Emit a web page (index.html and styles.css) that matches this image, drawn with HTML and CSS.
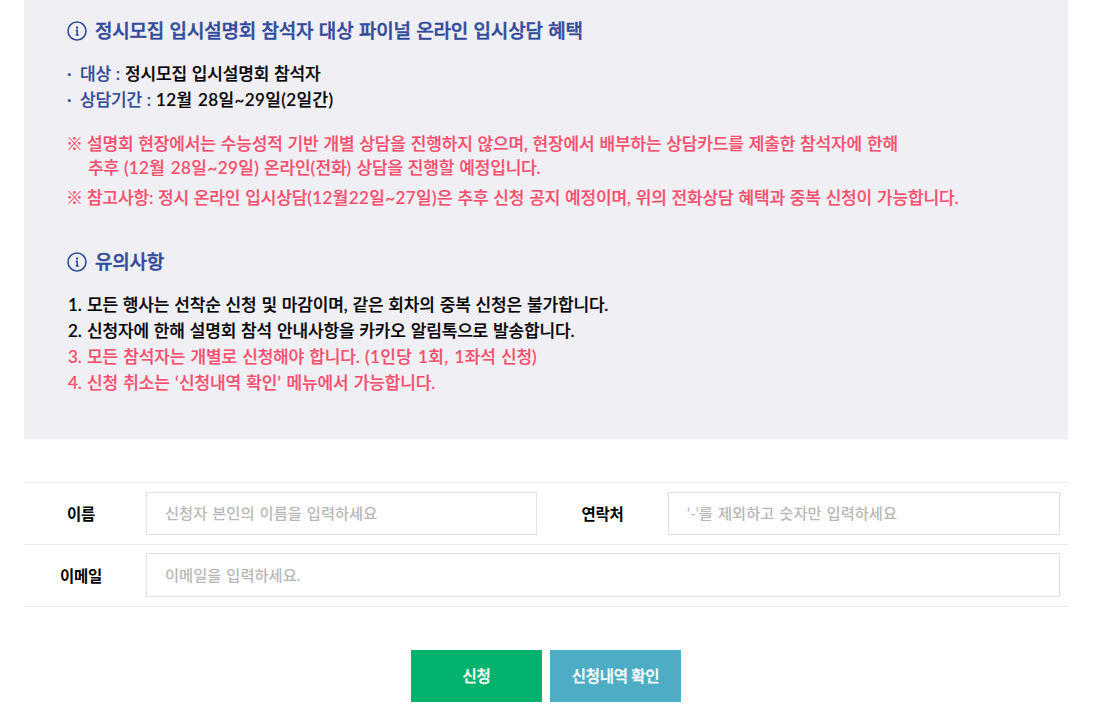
FILE: index.html
```html
<!DOCTYPE html>
<html lang="ko">

<head>
  <meta charset="UTF-8" />
  <meta name="viewport" content="width=device-width, initial-scale=1.0" />
  <title>입시설명회 신청</title>
  <link rel="stylesheet" href="styles.css">
</head>

<body>
  <div class="wrap">
    <section class="info">
      <h2 class="info-title">
        <svg class="icon" viewBox="0 0 20 20">
          <circle cx="10" cy="10" r="9" />
          <path d="M8.8 9.4H10.2V14M8.6 14H11.8" />
          <rect x="9" y="5.5" width="2.1" height="2.1" />
        </svg>
        <span>정시모집 입시설명회 참석자 대상 파이널 온라인 입시상담 혜택</span>
      </h2>
      <ul class="benefit">
        <li><span class="label">대상 :</span> 정시모집 입시설명회 참석자</li>
        <li><span class="label">상담기간 :</span> <span class="num">12월 28일~29일(2일간)</span></li>
      </ul>
      <div class="notes">
        <p class="note"><i>※</i><span>설명회 현장에서는 수능성적 기반 개별 상담을 진행하지 않으며, 현장에서 배부하는 상담카드를 제출한 참석자에 한해<br><span class="second">추후 <span class="num">(12월 28일~29일)</span> 온라인<span class="num">(</span>전화<span class="num">)</span> 상담을 진행할 예정입니다.</span></span></p>
        <p class="note"><i>※</i><span>참고사항: 정시 온라인 입시상담<span class="num">(12월22일~27일)</span>은 추후 신청 공지 예정이며, 위의 전화상담 혜택과 중복 신청이 가능합니다.</span></p>
      </div>

      <h2 class="info-title">
        <svg class="icon" viewBox="0 0 20 20">
          <circle cx="10" cy="10" r="9" />
          <path d="M8.8 9.4H10.2V14M8.6 14H11.8" />
          <rect x="9" y="5.5" width="2.1" height="2.1" />
        </svg>
        <span>유의사항</span>
      </h2>
      <ol class="caution">
        <li><i>1.</i><span>모든 행사는 선착순 신청 및 마감이며, 같은 회차의 중복 신청은 불가합니다.</span></li>
        <li><i>2.</i><span>신청자에 한해 설명회 참석 안내사항을 카카오 알림톡으로 발송합니다.</span></li>
        <li class="red"><i>3.</i><span>모든 참석자는 개별로 신청해야 합니다. <span class="num">(1인당 1회, 1</span>좌석 신청)</span></li>
        <li class="red"><i>4.</i><span>신청 취소는 <span class="num">‘</span>신청내역 확인<span class="num">’</span> 메뉴에서 가능합니다.</span></li>
      </ol>
    </section>

    <form>
      <div class="form-table">
        <div class="row">
          <label for="name">이름</label>
          <input type="text" id="name" class="half" placeholder="신청자 본인의 이름을 입력하세요">
          <label for="phone">연락처</label>
          <input type="text" id="phone" class="half" placeholder="‘-’를 제외하고 숫자만 입력하세요">
        </div>
        <div class="row">
          <label for="email">이메일</label>
          <input type="text" id="email" placeholder="이메일을 입력하세요.">
        </div>
      </div>
      <div class="buttons">
        <button type="button" class="btn apply">신청</button>
        <button type="button" class="btn check">신청내역 확인</button>
      </div>
    </form>
  </div>
</body>

</html>
```
FILE: styles.css
```css
* {
  box-sizing: border-box;
  margin: 0;
  padding: 0;
}

body {
  background: #fff;
  color: #000;
  font-family: Lato, "Noto Sans CJK KR", sans-serif;
}

i {
  font-style: normal;
}

.wrap {
  margin-left: 24px;
  width: 1044px;
}

.info {
  background: #f0eff4;
  height: 439px;
  padding: 17px 0 0 43px;
  font-size: 17px;
  font-weight: 500;
  letter-spacing: -0.15px;
  line-height: 26px;
  word-spacing: 0.75px;
  white-space: nowrap;
  -webkit-text-stroke: 0.2px;
}

.info-title {
  display: flex;
  align-items: center;
  gap: 8px;
  color: #334b9b;
  font-size: 19px;
  font-weight: 500;
  letter-spacing: -0.2px;
  line-height: 28px;
  word-spacing: 0.9px;
  -webkit-text-stroke: 0.45px;
}

.icon {
  width: 20px;
  height: 20px;
  fill: none;
  stroke: #334b9b;
  stroke-width: 1.6;
}

.icon rect {
  fill: #334b9b;
  stroke: none;
}

.benefit {
  list-style: none;
  margin-top: 16px;
}

.benefit li::before {
  content: "·";
  color: #334b9b;
  display: inline-block;
  width: 13px;
}

.label {
  color: #334b9b;
}

.num {
  letter-spacing: 0.4px;
}

.notes {
  margin-top: 19px;
  color: #f8506f;
}

.note {
  display: flex;
  line-height: 24px;
  margin-bottom: 6px;
}

.note i {
  width: 20px;
  text-indent: -1px;
}

.second {
  padding-left: 1px;
}

.notes + .info-title {
  margin-top: 38px;
}

.caution {
  list-style: none;
  margin-top: 16px;
}

.caution li {
  display: flex;
}

.caution i {
  width: 19px;
  margin-left: 1px;
}

.red {
  color: #f8506f;
  word-spacing: 1.1px;
}

.form-table {
  margin-top: 43px;
  border-top: 1px solid #e9e9e9;
}

.row {
  display: flex;
  align-items: center;
  height: 62px;
  padding-right: 8px;
  padding-bottom: 1px;
  border-bottom: 1px solid #e9e9e9;
}

.row label {
  width: 114px;
  margin-right: 8px;
  color: #000;
  font-size: 15.5px;
  font-weight: 700;
  letter-spacing: -0.3px;
  text-align: center;
}

.row input + label {
  width: 131px;
  margin-right: 0;
}

.row input {
  flex: 1;
  min-width: 0;
  height: 44px;
  padding: 0 18px;
  border: 1px solid #e3e3e3;
  font-family: inherit;
  font-size: 15.3px;
  font-weight: 500;
  word-spacing: 1.2px;
}

.row .half {
  flex: none;
  width: 391px;
  height: 43px;
  margin-top: 1px;
  padding-bottom: 2px;
}

.row label + .half:last-child {
  width: 392px;
}

.row input::placeholder {
  color: #b8b8b8;
}

.buttons {
  display: flex;
  justify-content: center;
  gap: 8px;
  margin-top: 43px;
}

.btn {
  width: 131px;
  height: 52px;
  border: 0;
  color: #fff;
  font-family: inherit;
  font-size: 15.5px;
  font-weight: 500;
  letter-spacing: -0.3px;
  padding-bottom: 2px;
  -webkit-text-stroke: 0.3px;
}

.apply {
  background: #03b26c;
}

.check {
  background: #4dadc4;
}
```
